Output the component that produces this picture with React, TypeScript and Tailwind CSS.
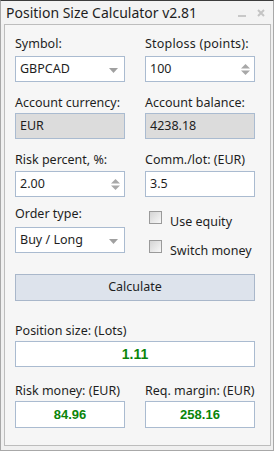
import React from 'react';

const font = { fontFamily: '"Noto Sans", "DejaVu Sans", sans-serif' };

const Label: React.FC<{ children: React.ReactNode; className?: string }> = ({ children, className = '' }) => (
  <div className={`h-[16px] leading-[16px] text-[12.5px] text-[#1e1e1e] whitespace-nowrap ${className}`}>{children}</div>
);

const Box: React.FC<{ children: React.ReactNode; gray?: boolean; className?: string }> = ({ children, gray, className = '' }) => (
  <div
    className={`relative flex items-center w-[110px] h-[26px] border border-[#aabbd0] pl-[4px] text-[12.5px] text-[#1e1e1e] ${
      gray ? 'bg-[#dcdcdc]' : 'bg-white'
    } ${className}`}
  >
    {children}
  </div>
);

const DropArrow = () => (
  <svg className="absolute right-[6px] top-[11px]" width="9" height="5" viewBox="0 0 9 5">
    <path d="M0 0 H9 L4.5 5 Z" fill="#a0a0a0" />
  </svg>
);

const Spinner = () => (
  <svg className="absolute right-[4px] top-[7px]" width="9" height="11" viewBox="0 0 9 11">
    <path d="M0 4.5 L4.5 0 L9 4.5 Z" fill="#a8a8a8" />
    <path d="M0 6.5 H9 L4.5 11 Z" fill="#a8a8a8" />
  </svg>
);

const Check: React.FC<{ label: string }> = ({ label }) => (
  <div className="flex items-start h-[13px]">
    <div className="shrink-0 w-[13px] h-[13px] border border-[#9a9a9a] bg-gradient-to-br from-[#d4d4d4] to-[#f8f8f8] ml-[4px]" />
    <span className="ml-[8px] mt-[3px] text-[12.5px] leading-[16px] text-[#1e1e1e] whitespace-nowrap">{label}</span>
  </div>
);

const Result: React.FC<{ value: string; wide?: boolean; big?: boolean }> = ({ value, wide, big }) => (
  <div
    className={`flex items-center justify-center bg-white border border-[#aabbd0] ${wide ? 'w-[240px] h-[26px]' : 'w-[110px] h-[27px]'}`}
  >
    <span
      className={`font-bold text-[#0a850a] ${big ? 'text-[14px]' : 'text-[13px]'}`}
      style={{ fontFamily: '"Liberation Sans", Arial, sans-serif' }}
    >
      {value}
    </span>
  </div>
);

export default function App() {
  return (
    <div className="w-[274px] h-[451px] bg-[#f0f0f0] border-t border-t-[#3c3c3c] border-l border-r border-b border-[#a8a8a8] flex flex-col" style={font}>
      {/* title bar */}
      <div className="h-[23px] flex items-center justify-between pl-[5px] pr-[8px] bg-[#f3f3f3]">
        <span className="text-[14px] text-[#1e1e1e]">Position Size Calculator v2.81</span>
        <div className="flex items-center gap-[11px]">
          <div className="w-[8px] h-[2px] bg-[#c8c8c8] mt-[6px]" />
          <svg width="8" height="8" viewBox="0 0 8 8">
            <path d="M1 1 L7 7 M7 1 L1 7" stroke="#c4c4c4" strokeWidth="2" />
          </svg>
        </div>
      </div>

      {/* panel */}
      <div className="ml-[3px] mr-[2px] mb-[4px] flex-1 border border-[#bdbdbd] bg-[#f6f6f6] pl-[10px]">
        {/* row 1 */}
        <div className="flex gap-[20px] mt-[11px]">
          <div>
            <Label className="mb-[4px]">Symbol:</Label>
            <Box>
              GBPCAD
              <DropArrow />
            </Box>
          </div>
          <div>
            <Label className="mb-[4px] tracking-[0.2px]">Stoploss (points):</Label>
            <Box>
              100
              <Spinner />
            </Box>
          </div>
        </div>

        {/* row 2 */}
        <div className="flex gap-[20px] mt-[13px]">
          <div>
            <Label className="mb-[2px]">Account currency:</Label>
            <Box gray>EUR</Box>
          </div>
          <div>
            <Label className="mb-[2px]">Account balance:</Label>
            <Box gray>4238.18</Box>
          </div>
        </div>

        {/* row 3 */}
        <div className="flex gap-[20px] mt-[13px]">
          <div>
            <Label className="mb-[3px]">Risk percent, %:</Label>
            <Box>
              2.00
              <Spinner />
            </Box>
          </div>
          <div>
            <Label className="mb-[3px]">Comm./lot: (EUR)</Label>
            <Box>3.5</Box>
          </div>
        </div>

        {/* row 4 */}
        <div className="flex items-start gap-[20px] mt-[9px]">
          <div>
            <Label className="mb-[5px]">Order type:</Label>
            <Box>
              Buy / Long
              <DropArrow />
            </Box>
          </div>
          <div className="flex flex-col gap-[16px] pt-[5px]">
            <Check label="Use equity" />
            <Check label="Switch money" />
          </div>
        </div>

        {/* calculate */}
        <button className="mt-[21px] w-[240px] h-[27px] bg-[#dde3ec] border border-[#a9b7ca] text-[12.5px] text-[#1e1e1e]">
          Calculate
        </button>

        {/* position size */}
        <div className="mt-[22px]">
          <Label className="mb-[2px]">Position size: (Lots)</Label>
          <Result value="1.11" wide big />
        </div>

        {/* risk / margin */}
        <div className="flex gap-[20px] mt-[16px]">
          <div>
            <Label className="mb-[2px]">Risk money: (EUR)</Label>
            <Result value="84.96" />
          </div>
          <div>
            <Label className="mb-[2px]">Req. margin: (EUR)</Label>
            <Result value="258.16" />
          </div>
        </div>
      </div>
    </div>
  );
}
